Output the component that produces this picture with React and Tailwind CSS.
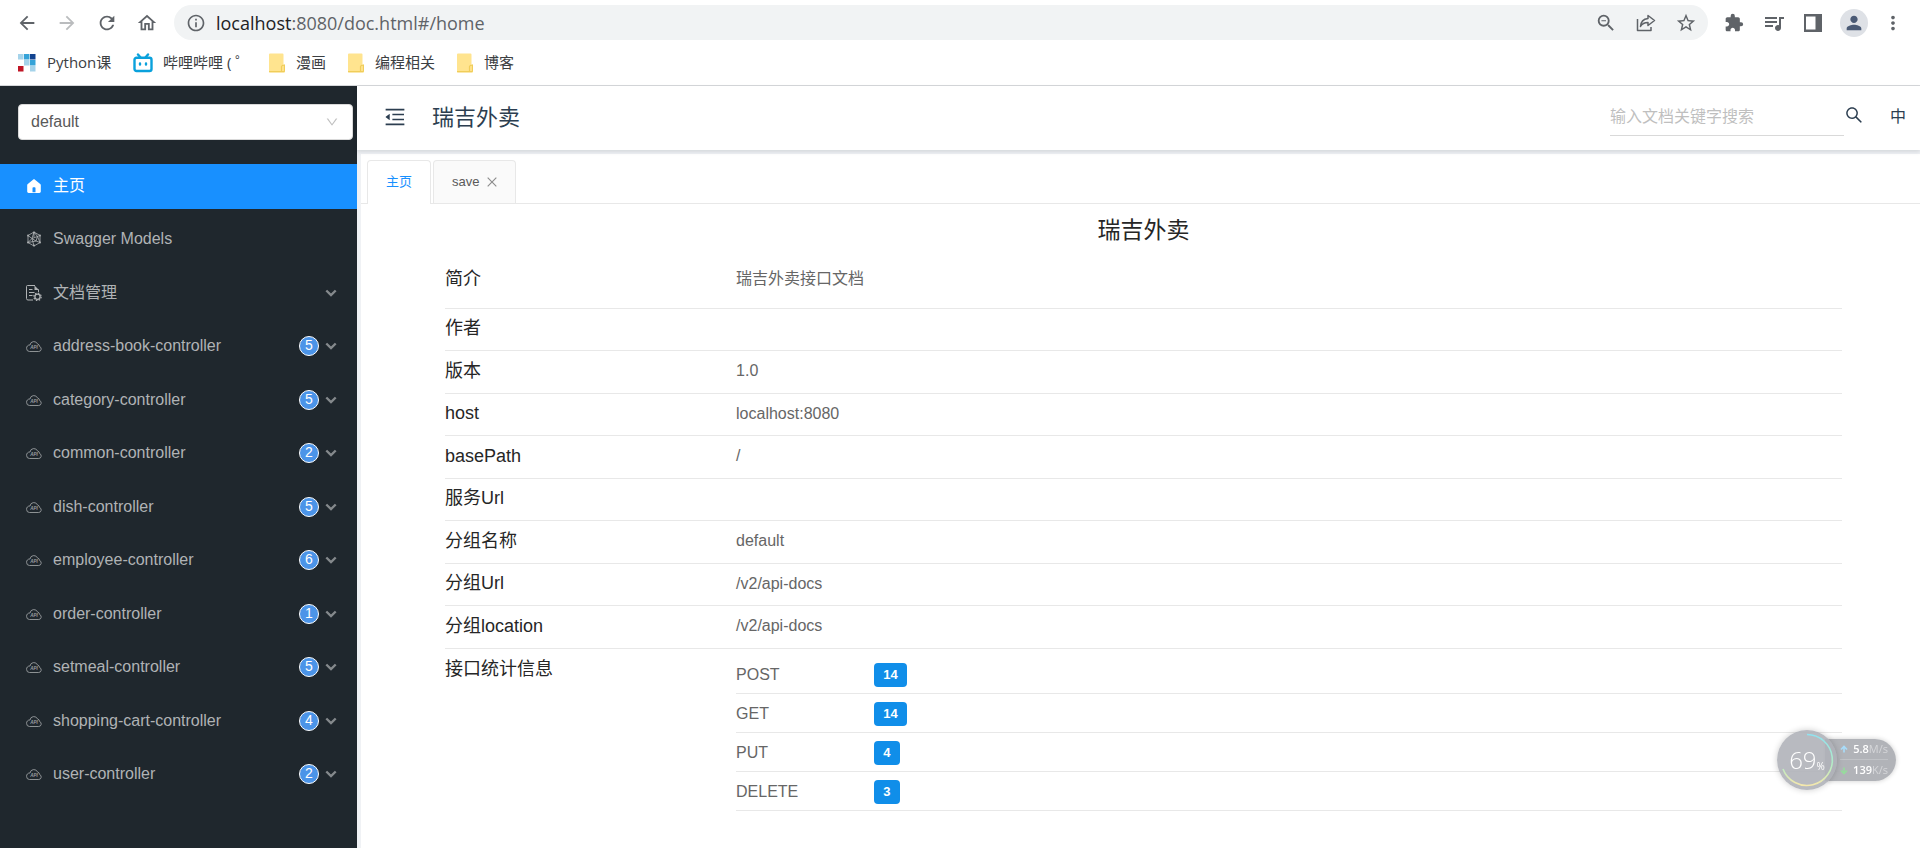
import React, { useState } from 'react';
import { AiOutlineClose, AiOutlineDown, AiOutlineMenuFold, AiOutlineSearch } from 'react-icons/ai';
import {
  MdArrowBack, MdArrowForward, MdExtension, MdInfoOutline, MdMoreVert, MdOutlineHome,
  MdPerson, MdQueueMusic, MdRefresh, MdStarOutline, MdZoomOut,
} from 'react-icons/md';

const controllers = [
  { name: 'address-book-controller', count: 5 },
  { name: 'category-controller', count: 5 },
  { name: 'common-controller', count: 2 },
  { name: 'dish-controller', count: 5 },
  { name: 'employee-controller', count: 6 },
  { name: 'order-controller', count: 1 },
  { name: 'setmeal-controller', count: 5 },
  { name: 'shopping-cart-controller', count: 4 },
  { name: 'user-controller', count: 2 },
];

const infoRows = [
  { label: '作者', value: '' },
  { label: '版本', value: '1.0' },
  { label: 'host', value: 'localhost:8080' },
  { label: 'basePath', value: '/' },
  { label: '服务Url', value: '' },
  { label: '分组名称', value: 'default' },
  { label: '分组Url', value: '/v2/api-docs' },
  { label: '分组location', value: '/v2/api-docs' },
];

const stats = [
  { method: 'POST', count: 14 },
  { method: 'GET', count: 14 },
  { method: 'PUT', count: 4 },
  { method: 'DELETE', count: 3 },
];

function PythonIcon() {
  const cells = [
    [0, 0, '#a5d3ea'], [6, 0, '#35a3d8'], [12, 0, '#12438f'],
    [6, 6, '#a5d3ea'], [12, 6, '#35a3d8'],
    [0, 12, '#c01525'], [12, 12, '#a5d3ea'],
  ];
  return (
    <svg viewBox="0 0 18 18" className="w-[18px] h-[18px]">
      {cells.map(([x, y, fill]) => <rect key={`${x}-${y}`} x={x} y={y} width="5.5" height="5.5" fill={fill} />)}
    </svg>
  );
}

function BilibiliIcon() {
  return (
    <svg viewBox="0 0 20 20" className="w-5 h-5" fill="none" stroke="#0aa1dc" strokeWidth="2.4" strokeLinecap="round">
      <path d="M5 1.5l2.5 3M15 1.5l-2.5 3" />
      <rect x="1.5" y="4.8" width="17" height="13.2" rx="2" />
      <path d="M7 10.5v1M13 10.5v1" />
    </svg>
  );
}

function FolderIcon() {
  return (
    <svg viewBox="0 0 16 20" className="w-4 h-5">
      <path d="M1 .5h12.5a1 1 0 0 1 1 1V12H16v6.5a1 1 0 0 1-1 1H1a1 1 0 0 1-1-1v-17a1 1 0 0 1 1-1z" fill="#ffe48f" />
      <path d="M0 18.7h15.5M12.500 19v-5.5c0-1 3-1.5 3-1.5v6.5" fill="none" stroke="#f0cd5a" strokeWidth="1.2" />
    </svg>
  );
}

function ShareIcon() {
  return (
    <svg viewBox="0 0 20 20" className="w-5 h-5" fill="none" stroke="#5f6368" strokeWidth="1.5" strokeLinejoin="round">
      <path d="M1.500 6v11.500h13.500V14" />
      <path d="M12 2.500l6.500 5-6.500 5v-3c-3.500 0-6 1.200-7.500 4 .3-4.500 3-7.500 7.500-8z" />
    </svg>
  );
}

function SidePanelIcon() {
  return (
    <svg viewBox="0 0 18 18" className="w-[18px] h-[18px]" fill="#5f6368">
      <path fillRule="evenodd" d="M0 0h18v18H0zM2 2.500v13h9.500v-13z" />
    </svg>
  );
}

function HomeIcon() {
  return (
    <svg viewBox="0 0 14 14" className="w-3.5 h-3.5" fill="currentColor">
      <path fillRule="evenodd" d="M6.300.4a1.100 1.100 0 0 1 1.400 0l5.500 4.500c.4.300.6.7.6 1.200v6.400c0 .8-.6 1.400-1.400 1.400H1.600c-.8 0-1.400-.6-1.400-1.400V6.100c0-.5.2-.9.6-1.200zM5.500 9v4.200h3V9c0-.5-.4-.8-.8-.8H6.300c-.4 0-.8.3-.8.8z" />
    </svg>
  );
}

function ModelsIcon() {
  return (
    <svg viewBox="0 0 16 16" className="w-4 h-4" fill="none" stroke="currentColor" strokeWidth=".8">
      <path d="M8 1l6 3.500v7L8 15l-6-3.500v-7z" />
      <path d="M8 1v5M2 4.500l4 3M14 4.500l-8 3L8 15M2 11.500l8-1.500 4 1.500M8 1l3.500 4.500L10 10 6 7.500zM6 7.500l-4 4M11.500 5.500l2.500 6" />
      <g fill="currentColor" stroke="none">
        <circle cx="8" cy="1.500" r=".9" />
        <circle cx="14" cy="4.500" r=".9" />
        <circle cx="14" cy="11.500" r=".9" />
        <circle cx="8" cy="14.500" r=".9" />
        <circle cx="2" cy="11.500" r=".9" />
        <circle cx="2" cy="4.500" r=".9" />
      </g>
    </svg>
  );
}

function DocIcon() {
  return (
    <svg viewBox="0 0 16 16" className="w-4 h-4" fill="none" stroke="currentColor" strokeWidth="1">
      <path d="M7 15H2A1.500 1.500 0 0 1 .5 13.500v-12A1 1 0 0 1 1.500.5H9M12.500 7V4.500" />
      <path d="M8.500.5v4.500h4.500z" fill="currentColor" stroke="none" />
      <path d="M3 4.500h3.500M3 7.500h5.500M3 10.500h3.500" />
      <circle cx="11.500" cy="11.800" r="2.600" strokeWidth="1.300" />
      <circle cx="11.500" cy="11.800" r="3.700" strokeWidth="1.200" strokeDasharray="1.500 1.400" />
    </svg>
  );
}

function CloudApiIcon() {
  return (
    <svg viewBox="0 0 16 16" className="w-4 h-4 opacity-85" fill="none" stroke="currentColor" strokeWidth=".9">
      <path d="M3.500 13.500h9.200a2.600 2.600 0 0 0 .9-5 3.200 3.200 0 0 0-2.200-2.700A3.900 3.900 0 0 0 4 7 3.100 3.100 0 0 0 .6 10.500a3 3 0 0 0 2.900 3z" />
      <text x="4.200" y="11" fontSize="4.500" fontStyle="italic" fontWeight="700" fill="currentColor" stroke="none">API</text>
    </svg>
  );
}

function ChevronIcon() {
  return (
    <svg viewBox="0 0 12 12" className="w-3 h-3 opacity-70" fill="none" stroke="currentColor" strokeWidth="2.4">
      <path d="M1.300 3.500L6 8l4.700-4.500" />
    </svg>
  );
}

function BrowserBar() {
  return (
    <div className="border-b border-[#d5d7da] bg-white font-['Open_Sans','Noto_Sans_CJK_SC',sans-serif] text-[#5f6368]">
      <div className="flex items-center pt-[5px] pl-4 pr-4">
        <div className="flex items-center gap-[18px]">
          <button aria-label="Back"><MdArrowBack className="w-[22px] h-[22px]" /></button>
          <button aria-label="Forward" className="text-[#babcbe]"><MdArrowForward className="w-[22px] h-[22px]" /></button>
          <button aria-label="Reload"><MdRefresh className="w-[22px] h-[22px]" /></button>
          <button aria-label="Home"><MdOutlineHome className="w-[22px] h-[22px]" /></button>
        </div>
        <div className="flex flex-1 items-center h-[35px] ml-4 pl-3 pr-[11px] rounded-full bg-[#f1f3f4]">
          <MdInfoOutline className="w-5 h-5" />
          <div className="flex-1 ml-2.5 text-[18px] leading-6"><span className="text-[#202124]">localhost</span>:8080/doc.html#/home</div>
          <div className="flex items-center gap-[19px]">
            <button aria-label="Zoom"><MdZoomOut className="w-[22px] h-[22px]" /></button>
            <button aria-label="Share"><ShareIcon /></button>
            <button aria-label="Bookmark"><MdStarOutline className="w-[22px] h-[22px]" /></button>
          </div>
        </div>
        <div className="flex items-center gap-[18px] ml-4">
          <button aria-label="Extensions"><MdExtension className="w-5 h-5" /></button>
          <button aria-label="Media"><MdQueueMusic className="w-6 h-6" /></button>
          <button aria-label="Side panel"><SidePanelIcon /></button>
          <button aria-label="Profile" className="flex items-center justify-center w-7 h-7 rounded-full bg-[#dee1e6] text-[#4a5a75]"><MdPerson className="w-[22px] h-[22px]" /></button>
          <button aria-label="Menu" className="-ml-1"><MdMoreVert className="w-[22px] h-[22px]" /></button>
        </div>
      </div>
      <div className="flex items-center h-[45px] pl-[18px] text-[15px] text-[#3c4043]">
        <a href="#python" className="flex items-center gap-[11px] w-[115px]"><PythonIcon />Python课</a>
        <a href="#bilibili" className="flex items-center gap-2.5 w-[136px] whitespace-pre"><BilibiliIcon />哔哩哔哩 ( ゜</a>
        <a href="#comics" className="flex items-center gap-[11px] w-[79px]"><FolderIcon />漫画</a>
        <a href="#coding" className="flex items-center gap-[11px] w-[109px]"><FolderIcon />编程相关</a>
        <a href="#blog" className="flex items-center gap-[11px]"><FolderIcon />博客</a>
      </div>
    </div>
  );
}

function MenuItem({ icon, label, count, expandable, active }) {
  return (
    <li className="odd:mb-2 even:mb-[9px]">
      <button
        className={`flex items-center w-full h-[45px] pl-[26px] pr-5 pb-0.5 text-left text-[16px] ${active ? 'bg-[#1890ff] text-white' : 'text-[#b0b3b5] hover:text-white'}`}
      >
        <span className="flex justify-center w-4 mr-[11px]">{icon}</span>
        <span className="flex-1">{label}</span>
        {count !== undefined && (
          <span className="flex items-center justify-center w-5 h-5 mr-1.5 rounded-full border border-white bg-[#4b94e8] text-[14px] text-white">{count}</span>
        )}
        {expandable && <ChevronIcon />}
      </button>
    </li>
  );
}

function Sidebar() {
  const [group, setGroup] = useState('default');
  return (
    <aside className="shrink-0 w-[357px] bg-[#1f272d]">
      <div className="relative mt-[18px] ml-[18px] mr-1">
        <select
          aria-label="分组"
          value={group}
          onChange={(e) => setGroup(e.target.value)}
          className="w-full h-9 pl-3 pr-9 appearance-none rounded border border-[#d9d9d9] bg-white text-[16px] text-[#595959] outline-none"
        >
          <option value="default">default</option>
        </select>
        <AiOutlineDown className="absolute right-3.5 top-[11px] w-3.5 h-3.5 text-[#bfbfbf] pointer-events-none" />
      </div>
      <ul className="mt-6">
        <MenuItem active icon={<HomeIcon />} label="主页" />
        <MenuItem icon={<ModelsIcon />} label="Swagger Models" />
        <MenuItem expandable icon={<DocIcon />} label="文档管理" />
        {controllers.map((c) => (
          <MenuItem key={c.name} expandable icon={<CloudApiIcon />} label={c.name} count={c.count} />
        ))}
      </ul>
    </aside>
  );
}

function Header() {
  return (
    <header className="relative flex items-center h-16 pl-[26px] pr-[14px] pb-0.5 bg-white text-[#2c3e50] shadow-[0_2px_4px_rgba(0,21,41,0.12)]">
      <button aria-label="收起菜单"><AiOutlineMenuFold className="w-6 h-6" /></button>
      <h1 className="flex-1 ml-[25px] text-[22px]">瑞吉外卖</h1>
      <input
        type="text"
        aria-label="搜索"
        placeholder="输入文档关键字搜索"
        className="w-[234px] h-[37px] border-b border-[#d9d9d9] text-[16px] outline-none placeholder:text-[#bfbfbf]"
      />
      <button aria-label="搜索文档" className="pb-1"><AiOutlineSearch className="w-5 h-5" /></button>
      <button className="ml-[26px] text-[16px]">中</button>
    </header>
  );
}

function Tabs() {
  return (
    <div className="flex gap-0.5 pl-1.5 pt-1.5 border-b border-[#e8e8e8] text-[13px]">
      <button className="h-[44px] px-[18px] pb-0.5 -mb-px rounded-t border border-b-0 border-[#e8e8e8] bg-white text-[#1890ff]">主页</button>
      <div className="flex items-center gap-1.5 h-[43px] pl-[18px] pr-4 rounded-t border border-b-0 border-[#e8e8e8] bg-[#fafafa] text-[#595959]">
        <button>save</button>
        <button aria-label="关闭"><AiOutlineClose className="w-3.5 h-3.5 text-[#8c8c8c]" /></button>
      </div>
    </div>
  );
}

function Home() {
  return (
    <div className="pl-[84px] pr-[78px] pb-8 text-[16px] text-[#666]">
      <h2 className="pt-2 pb-0.5 text-center text-[23px] leading-9 text-[#262626]">瑞吉外卖</h2>
      <dl>
        <div className="flex items-center h-[59px] border-b border-[#e8e8e8]">
          <dt className="w-5/24 text-[18px] text-[#262626]">简介</dt>
          <dd>瑞吉外卖接口文档</dd>
        </div>
        {infoRows.map((row) => (
          <div key={row.label} className="flex items-center odd:h-[43px] even:h-[42px] pb-0.5 border-b border-[#e8e8e8]">
            <dt className="w-5/24 text-[18px] text-[#262626]">{row.label}</dt>
            <dd>{row.value}</dd>
          </div>
        ))}
        <div className="flex pt-1.5">
          <dt className="w-5/24 text-[18px] leading-7 text-[#262626]">接口统计信息</dt>
          <dd className="flex-1">
            {stats.map((s) => (
              <div key={s.method} className="flex items-center h-[39px] pt-0.5 border-b border-[#e8e8e8]">
                <span className="w-1/8">{s.method}</span>
                <span className="h-6 px-[9px] rounded bg-[#108ee9] text-[13px] leading-6 font-bold text-white">{s.count}</span>
              </div>
            ))}
          </dd>
        </div>
      </dl>
    </div>
  );
}

function SpeedArrow({ down }) {
  return (
    <svg viewBox="0 0 8 8" className="w-2 h-2" fill="none" stroke={down ? '#96dc9c' : '#a8dcfa'} strokeWidth="1.6">
      <path d={down ? 'M4 .5v6M1 3.500l3 3 3-3' : 'M4 7.500v-6M1 4.500l3-3 3 3'} />
    </svg>
  );
}

// floating network / memory meter of the desktop
function SpeedMeter() {
  return (
    <div className="fixed right-6 bottom-[58px] flex items-center font-['Open_Sans',sans-serif] text-white">
      <div className="relative z-10 flex items-center justify-center w-[60px] h-[60px] rounded-full bg-[#b0b3b9]/90 shadow-[0_0_6px_rgba(0,0,0,0.2)]">
        <svg viewBox="0 0 60 60" className="absolute inset-0 w-full h-full" fill="none" strokeWidth="1.6">
          <defs>
            <linearGradient id="meter" x1="0" y1="0" x2="0" y2="1">
              <stop offset="0" stopColor="#8fe3f0" />
              <stop offset=".6" stopColor="#b5ecc4" />
              <stop offset="1" stopColor="#f5e8ac" />
            </linearGradient>
          </defs>
          <path d="M30 4.500A25.500 25.500 0 1 1 6 39" stroke="url(#meter)" />
        </svg>
        <span className="text-[24px] font-light">69</span>
        <span className="mt-3 text-[10px]">%</span>
      </div>
      <div className="flex flex-col justify-center h-[42px] w-[71px] -ml-3 pl-[15px] pr-2 rounded-r-full bg-[#a9abb0]/90 shadow-[0_0_5px_rgba(0,0,0,0.2)] text-[11px] font-semibold">
        <div className="flex items-center h-[21px] border-b border-white/20">
          <SpeedArrow /><span className="flex-1 text-right">5.8</span><span className="font-normal text-[#d5d6d9]">M/s</span>
        </div>
        <div className="flex items-center h-[21px]">
          <SpeedArrow down /><span className="flex-1 text-right">139</span><span className="font-normal text-[#d5d6d9]">K/s</span>
        </div>
      </div>
    </div>
  );
}

export default function App() {
  return (
    <div className="flex flex-col min-h-screen bg-white font-['Liberation_Sans','Noto_Sans_CJK_SC',sans-serif]">
      <BrowserBar />
      <div className="flex flex-1">
        <Sidebar />
        <main className="flex flex-col flex-1 min-w-0 bg-[#f0f2f5]">
          <Header />
          <div className="flex-1 mt-1 ml-1 bg-white">
            <Tabs />
            <Home />
          </div>
        </main>
      </div>
      <SpeedMeter />
    </div>
  );
}
